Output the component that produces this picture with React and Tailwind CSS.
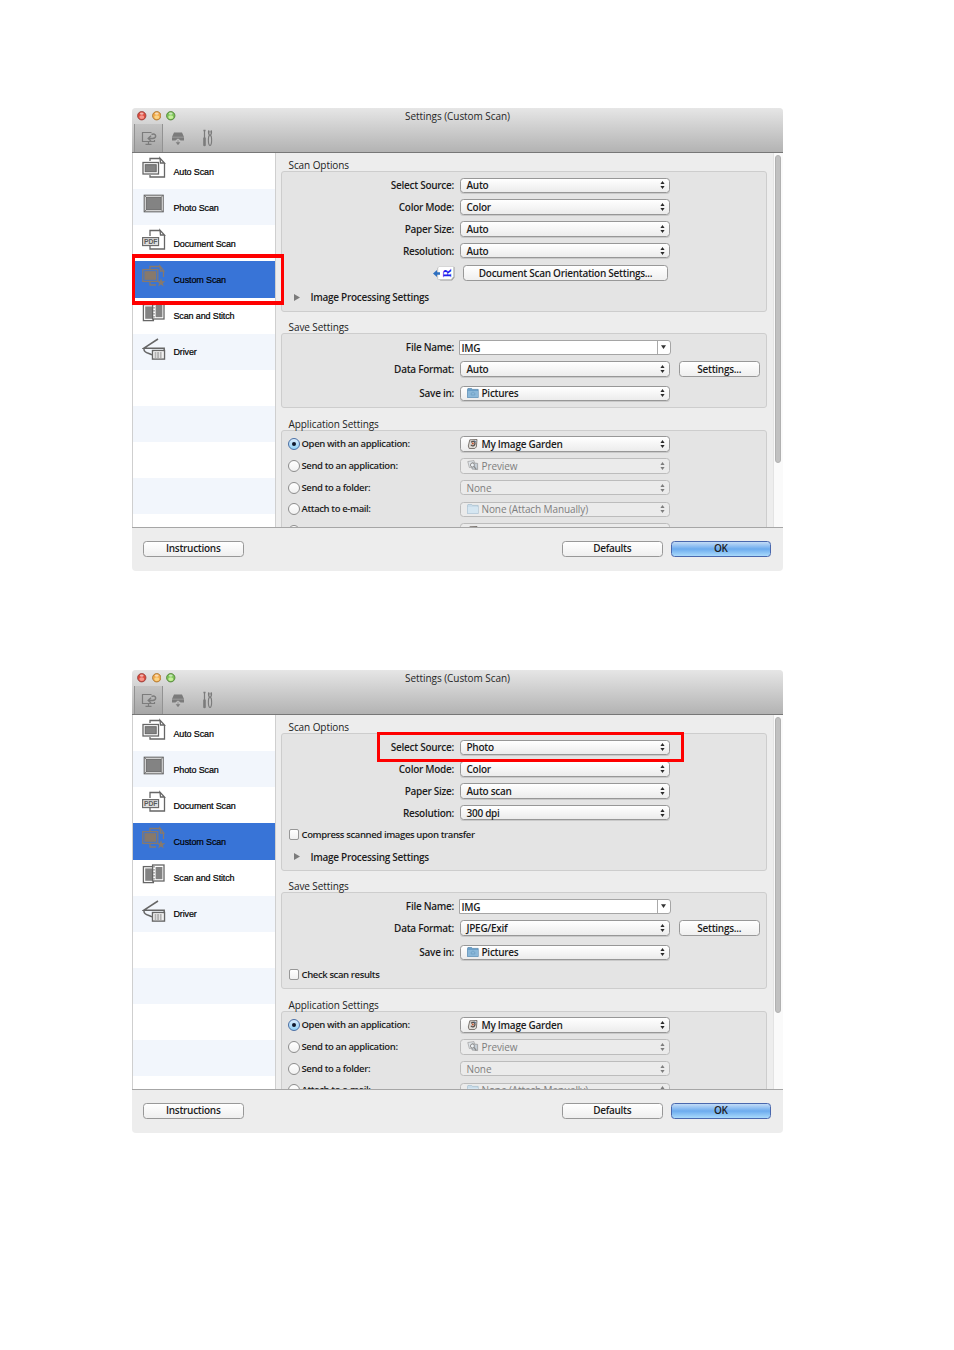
import { clsx } from 'clsx';

const SIDEBAR = [
  { label: 'Auto Scan',       icon: AutoIcon },
  { label: 'Photo Scan',      icon: PhotoIcon },
  { label: 'Document Scan',   icon: DocumentIcon },
  { label: 'Custom Scan',     icon: CustomIcon, active: true },
  { label: 'Scan and Stitch', icon: StitchIcon },
  { label: 'Driver',          icon: DriverIcon },
];

export default function App() {
  return (
    <main className="w-[954px] h-[1350px] bg-white pt-[108px] pl-[132px] text-[10px] leading-[14px] font-semibold tracking-[-0.28px] text-[#1c1c1c] font-['Open_Sans','Noto_Sans',sans-serif]">
      <div className="flex flex-col gap-[99px]">
        <SettingsWindow thumb="h-[308px]" callout="left-0 top-[146px] w-[152px] h-[50.5px] border-x-3 border-y-4">
          <Group title="Scan Options" className="h-[140.5px]">
            <Row label="Select Source:"><Select>Auto</Select></Row>
            <Row label="Color Mode:"><Select>Color</Select></Row>
            <Row label="Paper Size:"><Select>Auto</Select></Row>
            <Row label="Resolution:"><Select>Auto</Select></Row>
            <Row label={<OrientationIcon />} height="h-[23.2px]">
              <Button className="ml-[3px] w-[205px]">Document Scan Orientation Settings...</Button>
            </Row>
            <Disclosure className="h-[25.4px]" />
          </Group>
          <Group title="Save Settings" className="h-[75px]">
            <SaveRows format="Auto" />
          </Group>
          <Group title="Application Settings" className="h-[140px]">
            <ApplicationRows />
          </Group>
        </SettingsWindow>

        <SettingsWindow thumb="h-[296px]" callout="left-[245px] top-[62px] w-[307px] h-[29.5px] border-3">
          <Group title="Scan Options" className="h-[137.5px]">
            <Row label="Select Source:"><Select>Photo</Select></Row>
            <Row label="Color Mode:"><Select>Color</Select></Row>
            <Row label="Paper Size:"><Select>Auto scan</Select></Row>
            <Row label="Resolution:"><Select>300 dpi</Select></Row>
            <Check className="h-[22px]">Compress scanned images upon transfer</Check>
            <Disclosure className="h-[22.6px]" />
          </Group>
          <Group title="Save Settings" className="h-[97px]">
            <SaveRows format="JPEG/Exif" />
            <Check className="h-[18px]">Check scan results</Check>
          </Group>
          <Group title="Application Settings" className="h-[140px]">
            <ApplicationRows />
          </Group>
        </SettingsWindow>
      </div>
    </main>
  );
}

function SettingsWindow({ thumb, callout, children }) {
  return (
    <section className="relative w-[651px] h-[463px]">
      <div className="flex flex-col h-full rounded-[4px] overflow-hidden bg-[#ededed]">
        {/* Title bar and toolbar */}
        <header className="h-[45px] shrink-0 border-b border-[#777] bg-linear-to-b from-[#e6e6e6] to-[#b3b3b3]">
          <div className="relative h-4 flex items-center pl-[5px] gap-[5px]">
            <Light from="#ffb0a5" to="#dd4a3c" ring="#93413d" />
            <Light from="#ffe39a" to="#f0a84a" ring="#a8722c" />
            <Light from="#e0ffb0" to="#7cc458" ring="#4f7d35" />
            <h1 className="absolute inset-x-0 text-center font-medium tracking-[-0.06px] text-[#262626]">Settings (Custom Scan)</h1>
          </div>
          <Toolbar />
        </header>

        <div className="flex h-[374px] shrink-0 overflow-hidden">
          <Sidebar />
          <div className="flex-1 flex flex-col gap-[8.6px] pt-[5px] pl-[5px]">{children}</div>
          <div className="w-[10px] bg-[#fafafa] border-l border-[#e3e3e3] pt-[2px] pl-px">
            <div className={clsx('w-[6px] rounded-full bg-[#c1c1c1] border border-[#b1b1b1]', thumb)} />
          </div>
        </div>

        <footer className="flex-1 flex items-start border-t border-[#a6a6a6] pt-[13px] pl-[11px] pr-[12px]">
          <Button className="w-[100.5px]">Instructions</Button>
          <Button className="w-[100.5px] ml-auto">Defaults</Button>
          <Button primary className="w-[100.5px] ml-[8px]">OK</Button>
        </footer>
      </div>
      <div className={clsx('absolute border-[#fe0000]', callout)} />
    </section>
  );
}

function Light({ from, to, ring }) {
  return (
    <svg className="w-[9.5px] h-[9.5px]" viewBox="0 0 10 10">
      <circle cx="5" cy="5" r="4.4" fill={to} stroke={ring} strokeWidth="0.9" />
      <ellipse cx="5" cy="6.4" rx="2.6" ry="2" fill={from} opacity="0.75" />
      <ellipse cx="5" cy="2.8" rx="2" ry="1.1" fill="#fff" opacity="0.6" />
    </svg>
  );
}

function Toolbar() {
  return (
    <div className="flex h-[28px]">
      <div className="w-[29px] ml-[2px] border-x border-[#929292] bg-black/7 flex items-center justify-center">
        <svg className="w-[16px] h-[16px]" viewBox="0 0 16 16" fill="none" stroke="#7c7c7c" strokeWidth="1.2">
          <path d="M10.5 2.5H1.5v9h12v-1.5M7.5 11.5V14M4.5 14.3h6" />
          <path d="M10.5 4.5c2-1 4.2-.2 4.2 1.6 0 1.8-1.6 2.4-3.2 2.4H7.5M10 5.8L7.2 8.5l2.8 2.6" strokeWidth="1.4" />
        </svg>
      </div>
      <svg className="w-[14px] h-[16px] ml-[8px] mt-[6px]" viewBox="0 0 14 16" fill="#7b7b7b">
        <path d="M3 2.5h8L13 7v3.6H9.6L7 8.6l-2.6 2H1V7z" />
        <path d="M1 7.2h12" stroke="#b4b4b4" strokeWidth="0.6" />
        <path d="M7 9.8v3M5.2 12.4h3.6L7 14.8z" stroke="#7b7b7b" strokeWidth="0.5" />
      </svg>
      <svg className="w-[12px] h-[18px] ml-[17px] mt-[5px]" viewBox="0 0 12 18" fill="none" stroke="#7b7b7b">
        <path d="M2.5 1v8" strokeWidth="1.2" />
        <path d="M2.5 9.5v6.5" strokeWidth="2.6" strokeLinecap="round" />
        <path d="M1.5 1.5h2" strokeWidth="1.4" />
        <path d="M7 1.2c-1.2 1.8-.4 4.3 .6 4.8C6 7.4 5.8 15.6 8 16.6c2.2-1 2-9.2.4-10.6 1-.5 1.8-3 .6-4.8M8 4.4V2" strokeWidth="1.1" />
      </svg>
    </div>
  );
}

function Sidebar() {
  return (
    <nav className="w-[144px] shrink-0 border-x border-[#cfcfcf] bg-white text-[9px] font-normal tracking-[-0.14px] text-black font-['Liberation_Sans',Arial,sans-serif]">
      {SIDEBAR.map(({ label, icon: Icon, active }) => (
        <div key={label} className={clsx('flex h-[36.15px] pl-[9px]', active ? 'bg-[#3874d7]' : 'even:bg-[#f2f6fc]')}>
          <svg className="w-[24px] h-[28px] shrink-0" viewBox="0 0 24 28" fill="none" stroke={active ? '#87796c' : '#666'} strokeWidth="1.3">
            <Icon />
          </svg>
          <span className="ml-[7.5px] mt-[11.5px] [-webkit-text-stroke:0.2px_black]">{label}</span>
        </div>
      ))}
      {[0, 1, 2, 3, 4].map(i => (
        <div key={i} className="h-[36.15px] even:bg-[#f2f6fc]" />
      ))}
    </nav>
  );
}

function AutoIcon() {
  return (
    <>
      <path d="M8 8V5.5h10M22.5 10v14H8V22M18 5.2l4.5 4.8h-4z" />
      <rect x="1" y="9.5" width="15.5" height="11.5" fill="#fff" />
      <rect x="3.2" y="11.7" width="11" height="7" fill="#838383" strokeWidth="1" />
    </>
  );
}

function PhotoIcon() {
  return (
    <>
      <rect x="2.2" y="6.2" width="19" height="16.6" fill="#fff" strokeWidth="1.1" />
      <rect x="4.2" y="8.2" width="15" height="12.6" fill="#838383" strokeWidth="1" />
      <path d="M2.2 6.2l2 2M21.2 6.2l-2 2M2.2 22.8l2-2M21.2 22.8l-2-2" strokeWidth="0.8" />
    </>
  );
}

function DocumentIcon() {
  return (
    <>
      <path d="M8 11V5.5h10M22.5 10v14H8v-3M18 5.2l4.5 4.8h-4z" />
      <rect x="0.6" y="12.6" width="16" height="8" fill="#dedede" strokeWidth="1.1" />
      <text x="2" y="19.3" fontSize="7.2" fontWeight="bold" textLength="13.2" lengthAdjust="spacingAndGlyphs" fill="#5b5b5b" stroke="none" fontFamily="Liberation Sans, sans-serif">PDF</text>
    </>
  );
}

function CustomIcon() {
  return (
    <>
      <path d="M8 8V5.5h10M21.5 10v6M8 21v3h6M18 5.2l3.8 4.8h-3.3z" />
      <rect x="0.8" y="8.6" width="15" height="11.8" />
      <rect x="3" y="10.8" width="10.6" height="7.4" fill="#87796c" />
      <path d="M19 17l1.1 3.2h3.3l-2.6 2 1 3.3-2.8-2-2.8 2 1-3.3-2.6-2h3.3z" fill="#87796c" stroke="none" />
    </>
  );
}

function StitchIcon() {
  return (
    <>
      <rect x="1.4" y="6.6" width="10" height="16" fill="#fff" />
      <path d="M3.2 8.4h7v12.4h-7z" fill="#838383" stroke="none" />
      <rect x="10.6" y="5" width="11.4" height="16" fill="#fff" />
      <path d="M13.6 7h6.8v12.2h-6.8z" fill="#838383" stroke="none" />
      <path d="M12 6v14" strokeDasharray="1.6 1.4" strokeWidth="1" />
    </>
  );
}

function DriverIcon() {
  return (
    <>
      <path d="M16 5L2 14.2h20.2v2.6M2 14.2c-.6 4.6 4 4.6 8 6.6" strokeWidth="1.5" />
      <rect x="10.5" y="16.5" width="12" height="8.6" fill="#fff" strokeWidth="1.4" />
      <path d="M12.5 19h8M12.5 21h8M12.5 23h8" strokeWidth="1" strokeDasharray="2 .6" />
    </>
  );
}

function Group({ title, className, children }) {
  return (
    <div>
      <h2 className="pl-[7.5px] h-[13px] font-medium tracking-[-0.08px] text-[#222]">{title}</h2>
      <div className={clsx('w-[486px] pt-[2.5px] rounded-[3px] border border-[#cdcdcd] bg-[#e4e4e4]', className)}>
        {children}
      </div>
    </div>
  );
}

function Row({ label, height = 'h-[21.75px]', children }) {
  return (
    <div className={clsx('flex items-center', height)}>
      <div className="w-[172px] mr-[6px] flex justify-end whitespace-nowrap">{label}</div>
      {children}
    </div>
  );
}

function SaveRows({ format }) {
  return (
    <>
      <Row label="File Name:">
        <div className="-ml-[1.5px] w-[212px] h-[15px] flex bg-white border border-[#a5a5a5] rounded-r-[3px]">
          <span className="flex-1 pl-[2px] leading-[14px]">IMG</span>
          <span className="w-[13px] border-l border-[#aaa] flex items-center justify-center">
            <svg className="w-[5px] h-[4px]" viewBox="0 0 5 4"><path d="M0 .3h5L2.5 4z" fill="#333" /></svg>
          </span>
        </div>
      </Row>
      <Row label="Data Format:">
        <Select>{format}</Select>
        <Button className="w-[80.5px] ml-[9px]">Settings...</Button>
      </Row>
      <Row label="Save in:" height="h-[26.5px]"><Select icon={<FolderIcon />}>Pictures</Select></Row>
    </>
  );
}

function ApplicationRows() {
  return (
    <>
      <Radio label="Open with an application:" checked><Select icon={<GardenIcon />}>My Image Garden</Select></Radio>
      <Radio label="Send to an application:"><Select disabled icon={<PreviewIcon />}>Preview</Select></Radio>
      <Radio label="Send to a folder:"><Select disabled>None</Select></Radio>
      <Radio label="Attach to e-mail:"><Select disabled icon={<FolderIcon pale />}>None (Attach Manually)</Select></Radio>
      <Radio><Select disabled icon={<GardenIcon />} /></Radio>
    </>
  );
}

function Radio({ label, checked, children }) {
  return (
    <div className="flex items-center h-[21.75px]">
      <span className={clsx('ml-[5.5px] w-[12px] h-[12px] shrink-0 rounded-full border flex items-center justify-center', checked ? 'border-[#4a6fa5] bg-linear-to-b from-[#d9ebfb] to-[#8fd0f5]' : 'border-[#8d8d8d] bg-linear-to-b from-white to-[#f1f1f1]')}>
        {checked && <span className="w-1 h-1 rounded-full bg-[#10182c]" />}
      </span>
      <span className="w-[160.5px] shrink-0 pl-[2px] whitespace-nowrap text-[9.5px] tracking-[-0.38px]">{label}</span>
      {children}
    </div>
  );
}

function Check({ className, children }) {
  return (
    <div className={clsx('flex items-center', className)}>
      <span className="ml-[6.5px] w-[10.5px] h-[10.5px] rounded-[2px] border border-[#979797] bg-linear-to-b from-white to-[#f0f0f0]" />
      <span className="pl-[2.5px] whitespace-nowrap text-[9.5px] tracking-[-0.38px]">{children}</span>
    </div>
  );
}

function Disclosure({ className }) {
  return (
    <div className={clsx('flex items-center pl-[12px]', className)}>
      <svg className="w-[6px] h-[7px]" viewBox="0 0 6 7"><path d="M0 0l6 3.5L0 7z" fill="#7b7b7b" /></svg>
      <span className="pl-[10.5px] whitespace-nowrap">Image Processing Settings</span>
    </div>
  );
}

function Select({ icon, disabled, children }) {
  return (
    <div className={clsx('w-[210px] h-[15.5px] shrink-0 flex items-center rounded-[3.5px] border pl-[5.5px] pr-[4px]', disabled ? 'border-[#bcbcbc] bg-[#ebebeb] text-[#7e7e7e] font-medium tracking-[-0.1px]' : 'border-[#979797] bg-linear-to-b from-white to-[#ececec] shadow-[0_1px_0_#c9c9c9]')}>
      {icon && <span className="w-[15px] shrink-0">{icon}</span>}
      <span className="flex-1 leading-[14px] whitespace-nowrap">{children}</span>
      <svg className="w-[5px] h-[8px]" viewBox="0 0 5 8"><path d="M2.5 0l2.1 3.1H.4zM2.5 8L.4 4.9h4.2z" fill={disabled ? '#7d7d7d' : '#2b2b2b'} /></svg>
    </div>
  );
}

function Button({ primary, className, children }) {
  return (
    <button type="button" className={clsx('h-[15.5px] shrink-0 rounded-[3.5px] border leading-[13px] whitespace-nowrap', primary ? 'border-[#4a68ae] bg-linear-to-b from-[#c3dcf6] via-[#6cabee] to-[#a9dafb]' : 'border-[#989898] bg-linear-to-b from-white to-[#efefef]', className)}>
      {children}
    </button>
  );
}

function FolderIcon({ pale }) {
  return (
    <svg className="w-[12px] h-[10px]" viewBox="0 0 12 10">
      <path d="M.4 1.2L1 .4h3.6l.8 1h5.8v8.2H.4z" fill={pale ? '#c9dcea' : '#6b9fc8'} stroke={pale ? '#a3bccd' : '#4f82ab'} strokeWidth="0.7" />
      <path d="M.8 3h10.2v6.2H.8z" fill={pale ? '#d5e6f1' : '#8bb8d9'} />
      {!pale && <path d="M4.2 7V5.2l1.3-.9h1l1.3.9V7z" fill="none" stroke="#6a9cc2" strokeWidth="0.7" />}
    </svg>
  );
}

function GardenIcon() {
  return (
    <svg className="w-[11px] h-[10px]" viewBox="0 0 11 10">
      <path d="M2.8.8L10 .5l-.6 7.4-1.6 1.6H2.2L1.3 7z" fill="#dedbd6" stroke="#706a64" strokeWidth="0.9" />
      <path d="M4 3.2c2-1.6 4.2-.8 4 1.4-.2 2.4-3.2 3-4 1.2" fill="none" stroke="#564f4b" strokeWidth="1.3" />
      <circle cx="5.8" cy="4.6" r="1" fill="#c3532b" />
      <path d="M7.4 1.8l1.4 1" stroke="#3f6fa8" strokeWidth="1" />
    </svg>
  );
}

function PreviewIcon() {
  return (
    <svg className="w-[12px] h-[11px]" viewBox="0 0 12 11">
      <path d="M.8 1.5L7 .6l1 5.8-5.6 1.2z" fill="#dfe4e8" stroke="#9d9d9d" strokeWidth="0.7" />
      <path d="M5 2.8l5.6.6v6.2L5 9z" fill="#c5ced6" stroke="#919191" strokeWidth="0.7" />
      <circle cx="5.4" cy="5" r="2" fill="#eef2f5" stroke="#888" strokeWidth="0.9" />
      <path d="M7 6.4l2.2 3" stroke="#888" strokeWidth="1.2" />
    </svg>
  );
}

function OrientationIcon() {
  return (
    <svg className="w-[23px] h-[15px] -mr-[1.5px]" viewBox="0 0 23 15">
      <path d="M7.5 1h14v10.5l-2.5 3H7.5l-3-2V2z" fill="#9c9c9c" />
      <path d="M6 .5h14.6v10l-2.4 3H4.8V2z" fill="#fff" stroke="#c3c3c3" strokeWidth="0.6" />
      <path d="M0 7.5L4 4v2.3h3v2.4H4V11z" fill="#2d6fc0" />
      <text transform="translate(18 11.4) rotate(-90)" fontSize="13" fontWeight="bold" textLength="8.4" lengthAdjust="spacingAndGlyphs" fill="#1d22ee" fontFamily="Liberation Serif, serif">R</text>
    </svg>
  );
}
